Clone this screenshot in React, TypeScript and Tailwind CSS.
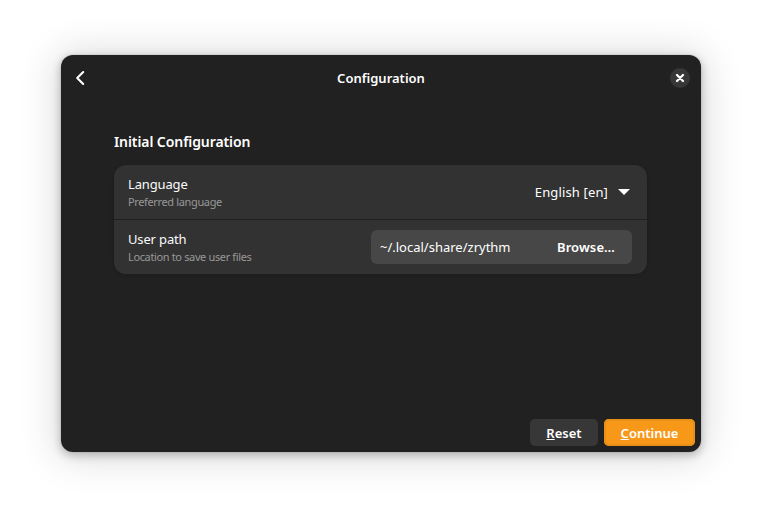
import type { ReactNode } from "react";

function Row({ title, subtitle, children }: { title: string; subtitle: string; children: ReactNode }) {
  return (
    <div className="flex h-[54px] items-center justify-between pl-3.5 pr-[15px]">
      <div className="flex flex-col">
        <span className="text-[13px] leading-[18px] tracking-[-0.15px] text-[#fafafa]">{title}</span>
        <span className="text-[11px] leading-[17px] tracking-[-0.36px] text-[#989898]">{subtitle}</span>
      </div>
      {children}
    </div>
  );
}

export default function App() {
  return (
    <div className="h-[519px] w-[762px] overflow-hidden bg-white pl-[61px] pt-[55px] font-['Noto_Sans',sans-serif] text-white">
      <main className="flex h-[397px] w-[640px] flex-col rounded-xl bg-[#212121] shadow-[0_3px_9px_1px_rgba(0,0,0,0.22),0_2px_38px_5px_rgba(0,0,0,0.14),0_0_0_1px_rgba(0,0,0,0.05)]">
        <header className="flex h-[46px] items-center justify-between pl-[11px] pr-[11px]">
          <button aria-label="Back" className="flex w-5 justify-start">
            <svg width="16" height="16" viewBox="0 0 16 16" fill="none" stroke="currentColor" strokeWidth="2.1" strokeLinecap="round" strokeLinejoin="round">
              <path d="M11.2 2 5.2 8l6 6" />
            </svg>
          </button>
          <h1 className="pt-0.5 text-[13px] font-semibold">Configuration</h1>
          <button aria-label="Close" className="flex size-5 items-center justify-center rounded-full bg-[#373737]">
            <svg width="10" height="10" viewBox="0 0 10 10" stroke="currentColor" strokeWidth="2.3" strokeLinecap="round">
              <path d="m2 2 6 6M8 2 2 8" />
            </svg>
          </button>
        </header>

        <section className="mt-[30px] flex-1 pl-[53px] pr-[54px]">
          <h2 className="text-sm font-semibold leading-[22px] tracking-[-0.08px]">Initial Configuration</h2>
          <div className="mt-3 h-[109px] rounded-xl bg-[#323232] shadow-[0_1px_3px_1px_rgba(0,0,0,0.1)]">
            <Row title="Language" subtitle="Preferred language">
              <button className="flex items-center gap-2.5 pr-0.5 text-[13px]">
                <span className="pt-0.5 tracking-[0.14px]">English [en]</span>
                <svg width="12" height="6" viewBox="0 0 12 6" fill="currentColor">
                  <path d="M0 0h12L6 6z" />
                </svg>
              </button>
            </Row>
            <div className="h-px bg-[#212121]" />
            <Row title="User path" subtitle="Location to save user files">
              <div className="flex h-[34px] w-[261px] items-center justify-between rounded-md bg-[#474747] pl-[9px] pr-[17px] pt-0.5 text-[13px]">
                <span>~/.local/share/zrythm</span>
                <button className="font-semibold tracking-[0.1px]">Browse…</button>
              </div>
            </Row>
          </div>
        </section>

        <footer className="flex justify-end gap-1.5 p-1.5 text-[13px] font-semibold">
          <button className="h-[27px] w-[68px] rounded-[5px] bg-[#373737] pt-0.5">
            <span className="underline underline-offset-1">R</span>eset
          </button>
          <button className="h-[27px] w-[91px] rounded-[5px] bg-[#f89818] pt-0.5 shadow-[inset_0_0_0_2px_#e78f17]">
            <span className="underline underline-offset-1">C</span>ontinue
          </button>
        </footer>
      </main>
    </div>
  );
}
